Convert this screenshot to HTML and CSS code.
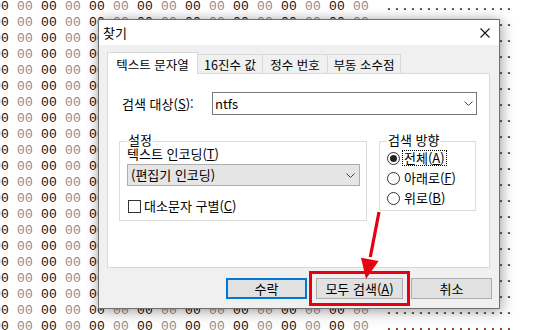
FILE: index.html
```html
<!DOCTYPE html>
<html lang="ko">
<head>
<meta charset="utf-8">
<title>찾기</title>
<link rel="stylesheet" href="styles.css">
</head>
<body>
<div class="hex">
<div class="r"><span>00</span><span>00</span><span>00</span><span>00</span> <span>00</span><span>00</span><span>00</span><span>00</span> <span>00</span><span>00</span><span>00</span><span>00</span> <span>00</span><span>00</span><span>00</span><span>00</span><em>................</em></div>
<div class="r"><span>00</span><span>00</span><span>00</span><span>00</span> <span>00</span><span>00</span><span>00</span><span>00</span> <span>00</span><span>00</span><span>00</span><span>00</span> <span>00</span><span>00</span><span>00</span><span>00</span><em>................</em></div>
<div class="r"><span>00</span><span>00</span><span>00</span><span>00</span> <span>00</span><span>00</span><span>00</span><span>00</span> <span>00</span><span>00</span><span>00</span><span>00</span> <span>00</span><span>00</span><span>00</span><span>00</span><em>................</em></div>
<div class="r"><span>00</span><span>00</span><span>00</span><span>00</span> <span>00</span><span>00</span><span>00</span><span>00</span> <span>00</span><span>00</span><span>00</span><span>00</span> <span>00</span><span>00</span><span>00</span><span>00</span><em>................</em></div>
<div class="r"><span>00</span><span>00</span><span>00</span><span>00</span> <span>00</span><span>00</span><span>00</span><span>00</span> <span>00</span><span>00</span><span>00</span><span>00</span> <span>00</span><span>00</span><span>00</span><span>00</span><em>................</em></div>
<div class="r"><span>00</span><span>00</span><span>00</span><span>00</span> <span>00</span><span>00</span><span>00</span><span>00</span> <span>00</span><span>00</span><span>00</span><span>00</span> <span>00</span><span>00</span><span>00</span><span>00</span><em>................</em></div>
<div class="r"><span>00</span><span>00</span><span>00</span><span>00</span> <span>00</span><span>00</span><span>00</span><span>00</span> <span>00</span><span>00</span><span>00</span><span>00</span> <span>00</span><span>00</span><span>00</span><span>00</span><em>................</em></div>
<div class="r"><span>00</span><span>00</span><span>00</span><span>00</span> <span>00</span><span>00</span><span>00</span><span>00</span> <span>00</span><span>00</span><span>00</span><span>00</span> <span>00</span><span>00</span><span>00</span><span>00</span><em>................</em></div>
<div class="r"><span>00</span><span>00</span><span>00</span><span>00</span> <span>00</span><span>00</span><span>00</span><span>00</span> <span>00</span><span>00</span><span>00</span><span>00</span> <span>00</span><span>00</span><span>00</span><span>00</span><em>................</em></div>
<div class="r"><span>00</span><span>00</span><span>00</span><span>00</span> <span>00</span><span>00</span><span>00</span><span>00</span> <span>00</span><span>00</span><span>00</span><span>00</span> <span>00</span><span>00</span><span>00</span><span>00</span><em>................</em></div>
<div class="r"><span>00</span><span>00</span><span>00</span><span>00</span> <span>00</span><span>00</span><span>00</span><span>00</span> <span>00</span><span>00</span><span>00</span><span>00</span> <span>00</span><span>00</span><span>00</span><span>00</span><em>................</em></div>
<div class="r"><span>00</span><span>00</span><span>00</span><span>00</span> <span>00</span><span>00</span><span>00</span><span>00</span> <span>00</span><span>00</span><span>00</span><span>00</span> <span>00</span><span>00</span><span>00</span><span>00</span><em>................</em></div>
<div class="r"><span>00</span><span>00</span><span>00</span><span>00</span> <span>00</span><span>00</span><span>00</span><span>00</span> <span>00</span><span>00</span><span>00</span><span>00</span> <span>00</span><span>00</span><span>00</span><span>00</span><em>................</em></div>
<div class="r"><span>00</span><span>00</span><span>00</span><span>00</span> <span>00</span><span>00</span><span>00</span><span>00</span> <span>00</span><span>00</span><span>00</span><span>00</span> <span>00</span><span>00</span><span>00</span><span>00</span><em>................</em></div>
<div class="r"><span>00</span><span>00</span><span>00</span><span>00</span> <span>00</span><span>00</span><span>00</span><span>00</span> <span>00</span><span>00</span><span>00</span><span>00</span> <span>00</span><span>00</span><span>00</span><span>00</span><em>................</em></div>
<div class="r"><span>00</span><span>00</span><span>00</span><span>00</span> <span>00</span><span>00</span><span>00</span><span>00</span> <span>00</span><span>00</span><span>00</span><span>00</span> <span>00</span><span>00</span><span>00</span><span>00</span><em>................</em></div>
<div class="r"><span>00</span><span>00</span><span>00</span><span>00</span> <span>00</span><span>00</span><span>00</span><span>00</span> <span>00</span><span>00</span><span>00</span><span>00</span> <span>00</span><span>00</span><span>00</span><span>00</span><em>................</em></div>
<div class="r"><span>00</span><span>00</span><span>00</span><span>00</span> <span>00</span><span>00</span><span>00</span><span>00</span> <span>00</span><span>00</span><span>00</span><span>00</span> <span>00</span><span>00</span><span>00</span><span>00</span><em>................</em></div>
<div class="r"><span>00</span><span>00</span><span>00</span><span>00</span> <span>00</span><span>00</span><span>00</span><span>00</span> <span>00</span><span>00</span><span>00</span><span>00</span> <span>00</span><span>00</span><span>00</span><span>00</span><em>................</em></div>
<div class="r"><span>00</span><span>00</span><span>00</span><span>00</span> <span>00</span><span>00</span><span>00</span><span>00</span> <span>00</span><span>00</span><span>00</span><span>00</span> <span>00</span><span>00</span><span>00</span><span>00</span><em>................</em></div>
<div class="r"><span>00</span><span>00</span><span>00</span><span>00</span> <span>00</span><span>00</span><span>00</span><span>00</span> <span>00</span><span>00</span><span>00</span><span>00</span> <span>00</span><span>00</span><span>00</span><span>00</span><em>................</em></div>
</div>

<div class="dialog">
  <div class="titlebar">
    <span class="title">찾기</span>
    <svg class="close" width="10" height="10" viewBox="0 0 10 10"><path d="M0.5 0.5L9.5 9.5M9.5 0.5L0.5 9.5" stroke="#111" stroke-width="1.1" fill="none"/></svg>
  </div>
  <div class="client">
    <div class="tabs">
      <div class="tab active">텍스트 문자열</div>
      <div class="tab t2">16진수 값</div>
      <div class="tab t3">정수 번호</div>
      <div class="tab t4">부동 소수점</div>
    </div>
    <div class="panel">
      <div class="target-row">
        <span class="target-label">검색 대상(<u>S</u>):</span>
        <div class="combo edit">
          <span class="val">ntfs</span>
          <svg class="chev" width="9" height="5" viewBox="0 0 9 5"><path d="M0.5 0.5L4.5 4.5L8.5 0.5" stroke="#444" stroke-width="1" fill="none"/></svg>
        </div>
      </div>
      <div class="groups">
        <fieldset class="grp settings">
          <legend>설정</legend>
          <div class="enc-label">텍스트 인코딩(<u>T</u>)</div>
          <div class="combo drop">
            <span class="val">(편집기 인코딩)</span>
            <svg class="chev" width="9" height="5" viewBox="0 0 9 5"><path d="M0.5 0.5L4.5 4.5L8.5 0.5" stroke="#444" stroke-width="1" fill="none"/></svg>
          </div>
          <div class="check-row">
            <span class="checkbox"></span>
            <span>대소문자 구별(<u>C</u>)</span>
          </div>
        </fieldset>
        <fieldset class="grp direction">
          <legend>검색 방향</legend>
          <div class="radios">
            <div class="radio-row"><span class="radio on"></span><span class="focus">전체(<u>A</u>)</span></div>
            <div class="radio-row"><span class="radio"></span><span class="rlabel">아래로(<u>F</u>)</span></div>
            <div class="radio-row"><span class="radio"></span><span class="rlabel">위로(<u>B</u>)</span></div>
          </div>
        </fieldset>
      </div>
    </div>
    <div class="buttons">
      <div class="btn default">수락</div>
      <div class="btn wide highlight">모두 검색(<u>A</u>)</div>
      <div class="btn">취소</div>
    </div>
  </div>
</div>

<svg class="arrow" width="548" height="330" viewBox="0 0 548 330">
  <path d="M379 212L370.3 257" stroke="#e60012" stroke-width="3.2" fill="none"/>
  <polygon points="366,279 378.6,261.1 361,257.7" fill="#e60012"/>
</svg>
</body>
</html>
```

FILE: styles.css
```css
html, body {
  margin: 0;
  padding: 0;
}
body {
  width: 548px;
  height: 330px;
  overflow: hidden;
  position: relative;
  background: #ffffff;
}

/* hex editor background */
.hex {
  width: 560px;
  height: 331px;
  overflow: hidden;
  margin: -1px 0 0 -7px;
  font-family: "Liberation Mono", "DejaVu Sans Mono", monospace;
  font-size: 13px;
  line-height: 16px;
  color: #111111;
}
.hex .r {
  display: grid;
  grid-template-columns: repeat(16, 24px) 8px 130px;
  grid-template-rows: 16px;
  height: 16px;
  overflow: hidden;
  white-space: nowrap;
}
.hex .r span {
  grid-row: 1;
  overflow: hidden;
  letter-spacing: 0.2px;
}
.hex .r span:nth-of-type(even) {
  color: #8c8c8c;
}
.hex .r span:nth-of-type(n+17) {
  display: none;
}
.hex .r em {
  grid-row: 1;
  grid-column: 18;
  font-style: normal;
  overflow: hidden;
  letter-spacing: 0.2px;
}

/* dialog window */
.dialog {
  position: absolute;
  left: 98px;
  top: 19px;
  width: 402px;
  box-sizing: border-box;
  border: 1px solid #6f6f6f;
  background: #f0f0f0;
  box-shadow: 0 0 10px rgba(0, 0, 0, 0.22), 2px 4px 14px rgba(0, 0, 0, 0.22);
  font-family: "Noto Sans CJK KR", "Noto Sans", sans-serif;
  font-size: 13px;
  color: #000;
  display: flex;
  flex-direction: column;
}
.titlebar {
  height: 25px;
  background: #ffffff;
  display: flex;
  align-items: center;
  justify-content: space-between;
  padding: 0 9px 0 4px;
}
.title {
  line-height: 14px;
}
.close {
  display: block;
}

.client {
  padding: 7px 7px 9px 8px;
  display: flex;
  flex-direction: column;
}

/* tabs */
.tabs {
  display: flex;
  align-items: flex-end;
  height: 21px;
  position: relative;
  z-index: 1;
  font-size: 12.5px;
}
.tab {
  box-sizing: border-box;
  height: 19px;
  border: 1px solid #d9d9d9;
  border-bottom: 0;
  padding-top: 3px;
  line-height: 14px;
  text-align: center;
  background: #f0f0f0;
  margin-left: -1px;
  white-space: nowrap;
}
.tab.active {
  width: 91px;
  height: 22px;
  margin: 0 0 -1px 0;
  padding-top: 5px;
  background: #ffffff;
  position: relative;
  z-index: 2;
}
.tab.t2 {
  width: 66px;
}
.tab.t3 {
  width: 66px;
}
.tab.t4 {
  width: 74px;
}

.panel {
  box-sizing: border-box;
  height: 195px;
  margin-right: 2px;
  border: 1px solid #d9d9d9;
  background: #ffffff;
  padding: 0 12px 0 11px;
}
.target-row {
  display: flex;
  align-items: center;
  margin-top: 18px;
  padding-left: 3px;
}
.target-label {
  width: 90px;
  line-height: 14px;
}
.combo {
  box-sizing: border-box;
  display: flex;
  align-items: center;
  line-height: 14px;
}
.combo .val {
  flex: 1;
}
.combo .chev {
  display: block;
}
.combo.edit {
  flex: 1;
  height: 23px;
  border: 1px solid #7a7a7a;
  background: #ffffff;
  padding: 0 3px 0 2px;
}
.combo.drop {
  height: 22px;
  margin-top: 5px;
  border: 1px solid #adadad;
  background: #e5e5e5;
  padding: 0 4px 0 3px;
}

.groups {
  display: flex;
  align-items: flex-start;
  gap: 12px;
  margin-top: 18px;
}
.grp {
  margin: 0;
  border: 1px solid #dcdcdc;
  min-width: 0;
}
.grp legend {
  padding: 0 1px 3px;
  line-height: 13px;
}
.settings {
  width: 248px;
  box-sizing: border-box;
  padding: 0 6px 7px 7px;
}
.enc-label {
  line-height: 10px;
}
.check-row {
  display: flex;
  align-items: center;
  gap: 3px;
  margin-top: 13px;
  line-height: 14px;
}
.checkbox {
  box-sizing: border-box;
  width: 13px;
  height: 13px;
  margin-left: 1px;
  border: 1px solid #333333;
  background: #ffffff;
}

.direction {
  width: 97px;
  box-sizing: border-box;
  padding: 0 2px 2px 7px;
}
.radios {
  margin-top: -1px;
}
.radio-row {
  height: 20px;
  display: flex;
  align-items: center;
  line-height: 14px;
  white-space: nowrap;
}
.radio {
  box-sizing: border-box;
  width: 13px;
  height: 13px;
  border: 1px solid #333333;
  border-radius: 50%;
  background: #ffffff;
  display: flex;
  align-items: center;
  justify-content: center;
  flex: none;
}
.radio.on::after {
  content: "";
  width: 7px;
  height: 7px;
  border-radius: 50%;
  background: #222222;
}
.focus {
  margin-left: 2px;
  padding: 0 1px;
  border: 1px dotted #000000;
  line-height: 14px;
}
.rlabel {
  margin-left: 4px;
}

/* buttons */
.buttons {
  display: flex;
  justify-content: flex-end;
  gap: 8px;
  margin-top: 10px;
}
.btn {
  box-sizing: border-box;
  width: 81px;
  height: 21px;
  border: 1px solid #adadad;
  background: #e1e1e1;
  display: flex;
  align-items: center;
  justify-content: center;
  line-height: 14px;
  white-space: nowrap;
}
.btn.default {
  border-color: #0078d7;
  box-shadow: inset 0 0 0 1px #0078d7;
  margin-right: 1px;
}
.btn.wide {
  width: 87px;
}
.btn.highlight {
  outline: 3px solid #e60012;
  outline-offset: 4px;
}

/* annotation arrow */
.arrow {
  position: absolute;
  left: 0;
  top: 0;
  pointer-events: none;
}
```
